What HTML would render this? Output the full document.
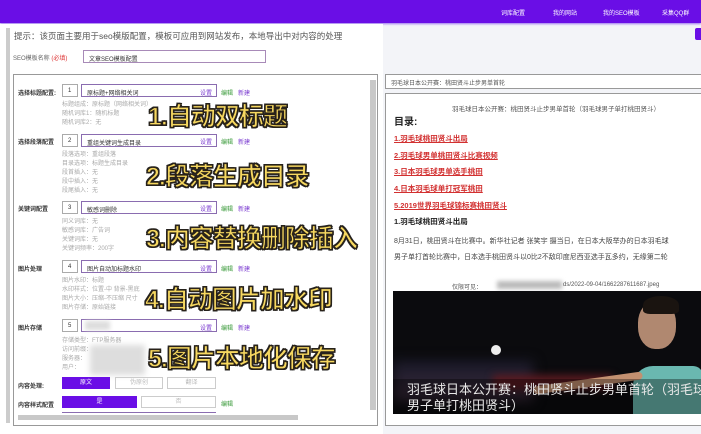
<!DOCTYPE html>
<html><head><meta charset="utf-8"><style>
*{margin:0;padding:0;box-sizing:border-box}
body{width:701px;height:434px;overflow:hidden;background:#f3f4f8;font-family:"Liberation Sans","Noto Sans CJK SC",sans-serif;position:relative;color:#333}
.a{position:absolute;white-space:nowrap}
.top{left:0;top:0;width:701px;height:23px;background:#6a0ee6;box-shadow:0 1px 2px #9a70f0}
.nav{color:#fff;font-size:6px;top:8px}
.t6{font-size:6px}
.sub{font-size:6px;color:#aaa;line-height:9px}
.lab{font-size:6px;color:#333;font-weight:bold}
.num{width:16px;height:13px;border:1px solid #aaa;font-size:6px;padding:3px 0 0 5px;background:#fff}
.inp{height:13px;border:1px solid #8a6cb0;font-size:6px;padding:3px 0 0 5px;background:#fff;color:#333}
.set{font-size:6px;color:#7a3ad0}
.ed{font-size:6px;color:#3a9a3a}
.nw{font-size:6px;color:#7a3ad0}
.big{font-size:25px;font-weight:bold;color:#f6d860;-webkit-text-stroke:1.2px #2a2218;text-shadow:1px 1px 0 #222,-1px -1px 0 #222,1px -1px 0 #222,-1px 1px 0 #222;letter-spacing:-1px}
.red{font-size:7.5px;color:#d23030;text-decoration:underline;font-weight:bold}
</style></head><body>
<div class="a top"></div>
<div class="a nav" style="left:501px">词库配置</div>
<div class="a nav" style="left:553px">我的网站</div>
<div class="a nav" style="left:603px">我的SEO模板</div>
<div class="a nav" style="left:662px">采集QQ群</div>
<div class="a" style="left:695px;top:28px;width:8px;height:12px;background:#6a0ee6;border-radius:2px"></div>

<div class="a" style="left:0;top:24px;width:383px;height:410px;background:#fff"></div>
<div class="a" style="left:6px;top:28px;width:4px;height:395px;background:#ccc"></div>
<div class="a" style="left:14px;top:30px;font-size:8.5px;color:#555">提示：该页面主要用于seo模版配置，模板可应用到网站发布，本地导出中对内容的处理</div>
<div class="a t6" style="left:13px;top:53px;color:#666">SEO模板名称 <span style="color:#d33">(必填)</span></div>
<div class="a inp" style="left:83px;top:50px;width:183px;height:13px;border-color:#a88ab8">文章SEO模板配置</div>

<div class="a" style="left:13px;top:74px;width:365px;height:352px;border:1px solid #999;background:#fff"></div>
<div class="a" style="left:370px;top:80px;width:6px;height:330px;background:#c8c8c8"></div>
<div class="a" style="left:18px;top:415px;width:280px;height:5px;background:#c8c8c8"></div>

<!-- row 1 -->
<div class="a lab" style="left:18px;top:88px">选择标题配置:</div>
<div class="a num" style="left:62px;top:84px">1</div>
<div class="a inp" style="left:81px;top:84px;width:136px">原标题+网络相关词</div>
<div class="a set" style="left:200px;top:88px">设置</div>
<div class="a ed" style="left:221px;top:88px">编辑</div><div class="a nw" style="left:238px;top:88px">新建</div>
<div class="a sub" style="left:62px;top:101px">标题组成：原标题（网络相关词）<br>随机词库1：随机标题<br>随机词库2：无</div>

<div class="a lab" style="left:18px;top:137px">选择段落配置</div>
<div class="a num" style="left:62px;top:134px">2</div>
<div class="a inp" style="left:81px;top:134px;width:136px">重组关键词生成目录</div>
<div class="a set" style="left:200px;top:137px">设置</div>
<div class="a ed" style="left:221px;top:137px">编辑</div><div class="a nw" style="left:238px;top:137px">新建</div>
<div class="a sub" style="left:62px;top:151px">段落选项：重组段落<br>目录选项：标题生成目录<br>段首插入：无<br>段中插入：无<br>段尾插入：无</div>

<div class="a lab" style="left:18px;top:204px">关键词配置</div>
<div class="a num" style="left:62px;top:201px">3</div>
<div class="a inp" style="left:81px;top:201px;width:136px">敏感词删除</div>
<div class="a set" style="left:200px;top:204px">设置</div>
<div class="a ed" style="left:221px;top:204px">编辑</div><div class="a nw" style="left:238px;top:204px">新建</div>
<div class="a sub" style="left:62px;top:218px">同义词库：无<br>敏感词库：广告词<br>关键词库：无<br>关键词频率：200字</div>

<div class="a lab" style="left:18px;top:264px">图片处理</div>
<div class="a num" style="left:62px;top:260px">4</div>
<div class="a inp" style="left:81px;top:260px;width:136px">图片自动加标题水印</div>
<div class="a set" style="left:200px;top:264px">设置</div>
<div class="a ed" style="left:221px;top:264px">编辑</div><div class="a nw" style="left:238px;top:264px">新建</div>
<div class="a sub" style="left:62px;top:277px">图片水印：标题<br>水印样式：位置-中 背景-黑底<br>图片大小：压缩-不压缩 尺寸<br>图片存储：原始链接</div>

<div class="a lab" style="left:18px;top:323px">图片存储</div>
<div class="a num" style="left:62px;top:319px">5</div>
<div class="a inp" style="left:81px;top:319px;width:136px"></div>
<div class="a" style="left:85px;top:321px;width:25px;height:9px;background:#ddd;filter:blur(2px)"></div>
<div class="a set" style="left:200px;top:323px">设置</div>
<div class="a ed" style="left:221px;top:323px">编辑</div><div class="a nw" style="left:238px;top:323px">新建</div>
<div class="a sub" style="left:62px;top:337px">存储类型：FTP服务器<br>访问前缀：<br>服务器：<br>用户：</div>
<div class="a" style="left:90px;top:345px;width:55px;height:30px;background:#ddd;filter:blur(3px)"></div>

<div class="a lab" style="left:18px;top:381px">内容处理:</div>
<div class="a" style="left:62px;top:377px;width:48px;height:12px;background:#6a0ee6;color:#fff;font-size:6px;text-align:center;line-height:12px">原文</div>
<div class="a" style="left:115px;top:377px;width:48px;height:12px;border:1px solid #ccc;color:#bbb;font-size:6px;text-align:center;line-height:11px">伪原创</div>
<div class="a" style="left:167px;top:377px;width:49px;height:12px;border:1px solid #ccc;color:#bbb;font-size:6px;text-align:center;line-height:11px">翻译</div>
<div class="a lab" style="left:18px;top:400px">内容样式配置</div>
<div class="a" style="left:62px;top:396px;width:75px;height:12px;background:#6a0ee6;color:#fff;font-size:6px;text-align:center;line-height:12px">是</div>
<div class="a" style="left:141px;top:396px;width:75px;height:12px;border:1px solid #ccc;color:#bbb;font-size:6px;text-align:center;line-height:11px">否</div>
<div class="a ed" style="left:221px;top:399px">编辑</div>
<div class="a" style="left:62px;top:412px;width:154px;height:3px;border-top:1px solid #8a6cb0"></div>

<div class="a big" style="left:148px;top:97px">1.自动双标题</div>
<div class="a big" style="left:146px;top:157px">2.段落生成目录</div>
<div class="a big" style="left:146px;top:219px">3.内容替换删除插入</div>
<div class="a big" style="left:145px;top:280px">4.自动图片加水印</div>
<div class="a big" style="left:148px;top:339px">5.图片本地化保存</div>

<!-- right -->
<div class="a" style="left:385px;top:74px;width:320px;height:15px;border:1px solid #999;background:#fff"></div>
<div class="a t6" style="left:391px;top:78px;color:#555">羽毛球日本公开赛：桃田贤斗止步男单首轮</div>
<div class="a" style="left:385px;top:93px;width:320px;height:333px;border:1px solid #999;background:#fff"></div>
<div class="a" style="left:452px;top:103px;font-size:6.5px;color:#555">羽毛球日本公开赛：桃田贤斗止步男单首轮（羽毛球男子单打桃田贤斗）</div>
<div class="a" style="left:394px;top:113px;font-size:10px;font-weight:bold;color:#222">目录:</div>
<div class="a red" style="left:394px;top:133px">1.羽毛球桃田贤斗出局</div>
<div class="a red" style="left:394px;top:150px">2.羽毛球男单桃田贤斗比赛视频</div>
<div class="a red" style="left:394px;top:166px">3.日本羽毛球男单选手桃田</div>
<div class="a red" style="left:394px;top:183px">4.日本羽毛球单打冠军桃田</div>
<div class="a red" style="left:394px;top:200px">5.2019世界羽毛球锦标赛桃田贤斗</div>
<div class="a" style="left:394px;top:216px;font-size:7.5px;font-weight:bold;color:#222">1.羽毛球桃田贤斗出局</div>
<div class="a" style="left:394px;top:236px;font-size:7px;color:#444">8月31日，桃田贤斗在比赛中。新华社记者 张笑宇 摄当日，在日本大阪举办的日本羽毛球</div>
<div class="a" style="left:394px;top:252px;font-size:7px;color:#444">男子单打首轮比赛中，日本选手桃田贤斗以0比2不敌印度尼西亚选手瓦多约，无缘第二轮</div>
<div class="a" style="left:452px;top:282px;font-size:6px;color:#555">仅限可见：</div>
<div class="a" style="left:497px;top:281px;width:65px;height:8px;background:#bbb;filter:blur(2px)"></div>
<div class="a" style="left:563px;top:282px;font-size:6px;color:#555">ds/2022-09-04/1662287611687.jpeg</div>
<div class="a" style="left:393px;top:291px;width:310px;height:123px;background:#0b0b0e;overflow:hidden">
 <div class="a" style="left:0;top:70px;width:140px;height:40px;background:linear-gradient(#1a1a2a,#3a2a3a);filter:blur(6px)"></div>
 <div class="a" style="left:100px;top:84px;width:120px;height:15px;background:#5a1a20;filter:blur(4px)"></div>
 <div class="a" style="left:240px;top:75px;width:70px;height:48px;background:#6ab8b0;border-radius:20px 10px 0 0"></div>
 <div class="a" style="left:245px;top:10px;width:38px;height:48px;background:#b08870;border-radius:45%"></div>
 <div class="a" style="left:250px;top:5px;width:36px;height:18px;background:#1a1410;border-radius:50% 50% 20% 20%"></div>
 <div class="a" style="left:140px;top:88px;width:110px;height:8px;background:#c29070;transform:rotate(-8deg);border-radius:4px"></div>
 <div class="a" style="left:98px;top:54px;width:10px;height:10px;background:#eee;border-radius:50%"></div>
 <div class="a" style="left:0;top:88px;width:310px;height:35px;background:rgba(0,0,0,.35)"></div>
 <div class="a" style="left:14px;top:91px;font-size:13px;color:#e8e8e8;line-height:16px">羽毛球日本公开赛：桃田贤斗止步男单首轮（羽毛球<br>男子单打桃田贤斗）</div>
</div>
</body></html>
